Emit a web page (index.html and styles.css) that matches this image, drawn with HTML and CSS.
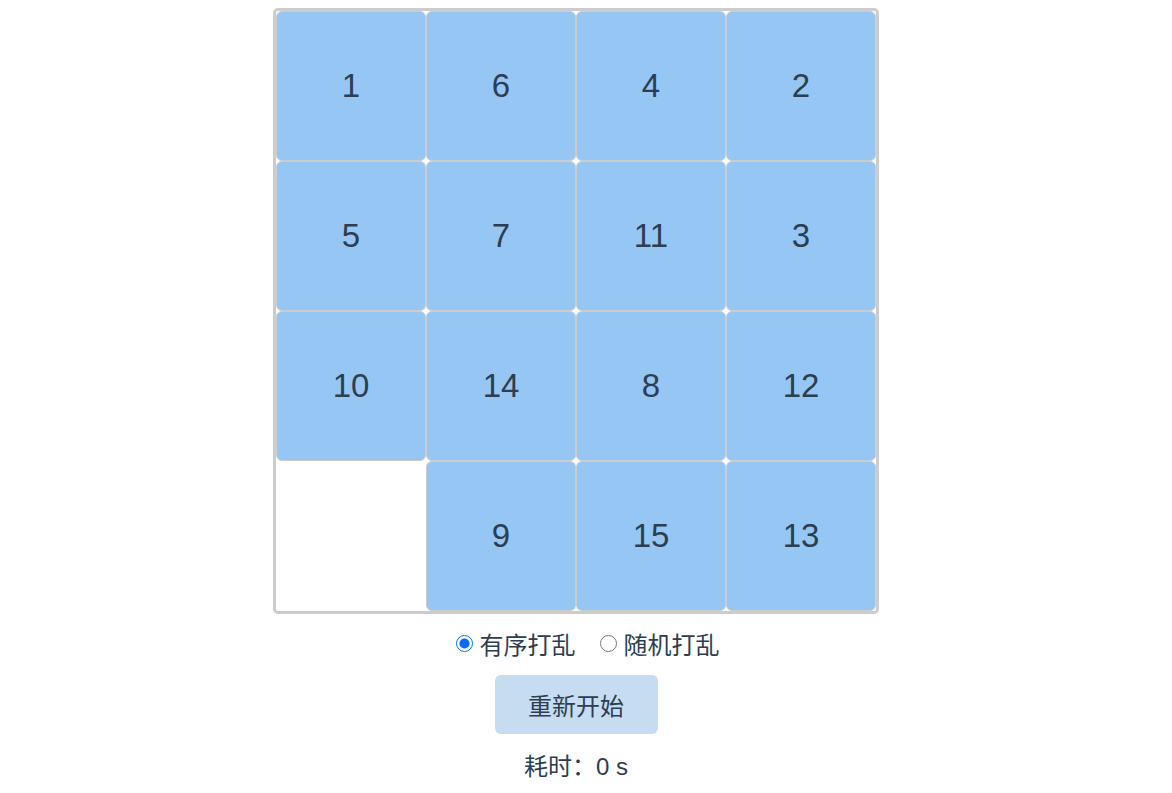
FILE: index.html
```html
<!DOCTYPE html>
<html lang="zh-CN">
<head>
<meta charset="utf-8">
<title>数字华容道</title>
<link rel="stylesheet" href="styles.css">
</head>
<body>
<div class="app">
  <div class="board">
    <div class="tile">1</div>
    <div class="tile">6</div>
    <div class="tile">4</div>
    <div class="tile">2</div>
    <div class="tile">5</div>
    <div class="tile">7</div>
    <div class="tile">11</div>
    <div class="tile">3</div>
    <div class="tile">10</div>
    <div class="tile">14</div>
    <div class="tile">8</div>
    <div class="tile">12</div>
    <div class="tile empty"></div>
    <div class="tile">9</div>
    <div class="tile">15</div>
    <div class="tile">13</div>
  </div>
  <div class="modes">
    <label class="mode"><input type="radio" name="mode" class="radio" checked>有序打乱</label>
    <label class="mode"><input type="radio" name="mode" class="radio">随机打乱</label>
  </div>
  <button class="restart">重新开始</button>
  <div class="timer">耗时：0 s</div>
</div>
</body>
</html>
```
FILE: styles.css
```css
body {
  margin: 0;
  background: #fff;
  font-family: "Liberation Sans", "Noto Sans CJK SC", sans-serif;
  color: #2c3e50;
}
.app {
  padding: 8px 20px 0 0;
  display: flex;
  flex-direction: column;
  align-items: center;
}
.board {
  display: grid;
  grid-template-columns: repeat(4, 150px);
  grid-auto-rows: 150px;
  border: 3px solid #cccccc;
  border-radius: 5px;
}
.tile {
  box-sizing: border-box;
  border: 1px solid #cccccc;
  border-radius: 6px;
  background: #96c6f4;
  display: flex;
  align-items: center;
  justify-content: center;
  font-size: 33px;
  color: #2c3e50;
}
.tile.empty {
  background: transparent;
  border-color: transparent;
}
.modes {
  display: flex;
  align-items: center;
  gap: 24px;
  margin-top: 14px;
  height: 30px;
  padding-left: 23px;
  font-size: 24px;
  color: #2c3e50;
}
.mode {
  display: flex;
  align-items: center;
  gap: 7px;
}
.radio {
  margin: 0;
  width: 17px;
  height: 17px;
  accent-color: #0a6cf5;
}
.restart {
  margin-top: 17px;
  width: 163px;
  height: 59px;
  border: none;
  border-radius: 6px;
  background: #c6dcf0;
  color: #2c3e50;
  font-family: "Liberation Sans", "Noto Sans CJK SC", sans-serif;
  font-size: 24px;
  padding: 0;
}
.timer {
  margin-top: 13px;
  font-size: 24px;
  color: #2c3e50;
}
```
